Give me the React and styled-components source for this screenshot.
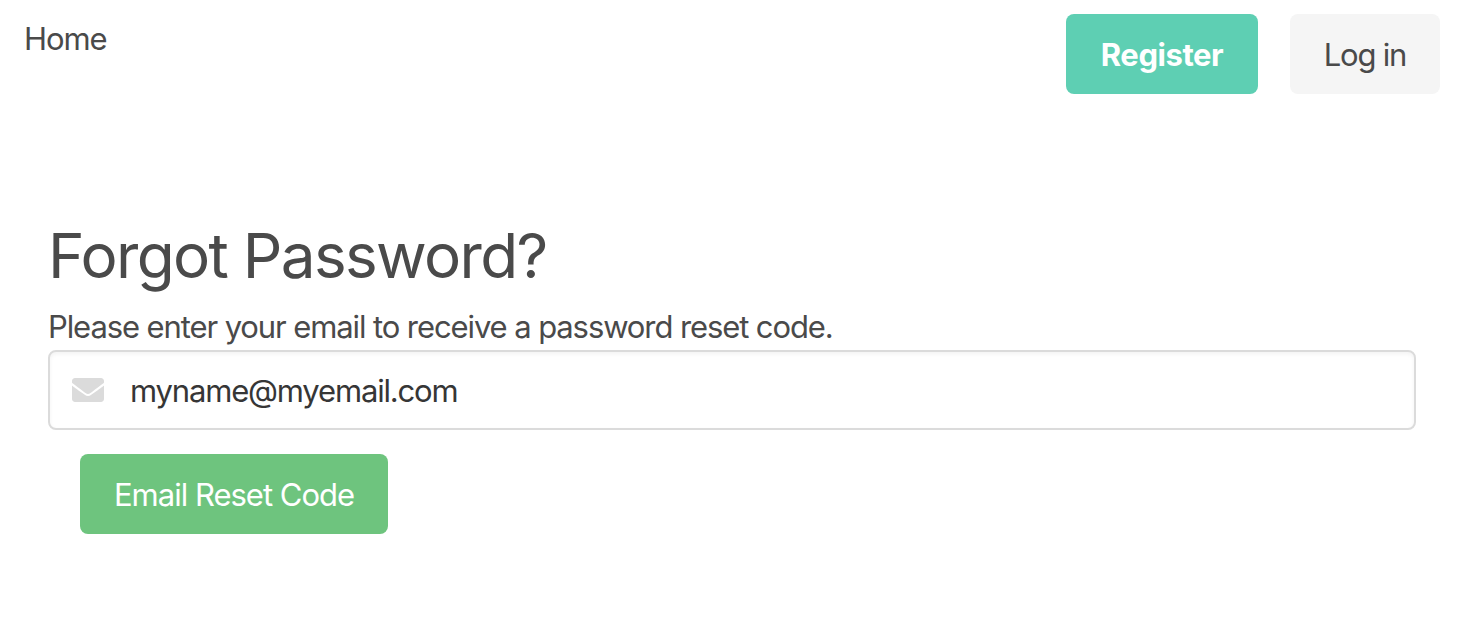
import React from "react";
import styled, { createGlobalStyle } from "styled-components";
import { FaEnvelope } from "react-icons/fa";

const Global = createGlobalStyle`
  *, *::before, *::after { box-sizing: border-box; }
  body { margin: 0; background: #fff; color: #4a4a4a; font: 400 31px/48px Inter, sans-serif; }
`;

const Navbar = styled.nav`
  display: flex;
  justify-content: space-between;
  align-items: flex-start;
  padding: 14px 20px 0 24px;
  height: 104px;
`;

const NavLink = styled.a`
  line-height: 50px;
`;

const Buttons = styled.div`
  display: flex;
  gap: 32px;
`;

const Label = styled.span`
  display: block;
  white-space: nowrap;
  letter-spacing: ${(p) => p.$tracking || "0"};
`;

const Button = styled.button`
  display: flex;
  align-items: center;
  justify-content: center;
  width: ${(p) => p.$width};
  height: 80px;
  padding: 2px 0 0;
  border: 0;
  border-radius: 8px;
  background: ${(p) => p.$bg};
  color: ${(p) => p.$color || "#fff"};
  font: inherit;
  font-weight: ${(p) => p.$weight || 400};
`;

const Main = styled.main`
  padding: 116px 44px 0 48px;
`;

const Title = styled.h1`
  margin: 0;
  font-size: 62px;
  font-weight: 400;
  line-height: 72px;
`;

const Hint = styled.p`
  margin: 11px 0 0;
  line-height: 48px;
`;

const Field = styled.div`
  display: flex;
  align-items: center;
  height: 80px;
  margin-top: -1px;
  padding-left: 22px;
  gap: 26px;
  border: 2px solid #dbdbdb;
  border-radius: 8px;
  box-shadow: inset 0 2px 4px rgba(10, 10, 10, 0.05);
  color: #363636;
`;

const MailIcon = styled(FaEnvelope)`
  width: 32px;
  height: 32px;
  color: #dbdbdb;
`;

const Email = styled(Label)`
  padding-top: 1px;
`;

const Actions = styled.div`
  padding: 24px 0 0 32px;
`;

export default function App() {
  return (
    <>
      <Global />
      <Navbar>
        <NavLink><Label $tracking="-1.1px">Home</Label></NavLink>
        <Buttons>
          <Button $width="192px" $bg="#5ecfb3" $weight={700}><Label $tracking="-0.45px">Register</Label></Button>
          <Button $width="150px" $bg="#f5f5f5" $color="#4a4a4a"><Label $tracking="-1.2px">Log in</Label></Button>
        </Buttons>
      </Navbar>
      <Main>
        <Title><Label $tracking="-1.67px">Forgot Password?</Label></Title>
        <Hint><Label $tracking="-1.1px">Please enter your email to receive a password reset code.</Label></Hint>
        <Field><MailIcon /><Email $tracking="-1.17px">myname@myemail.com</Email></Field>
        <Actions>
          <Button $width="308px" $bg="#6ec47e"><Label $tracking="-1px">Email Reset Code</Label></Button>
        </Actions>
      </Main>
    </>
  );
}
